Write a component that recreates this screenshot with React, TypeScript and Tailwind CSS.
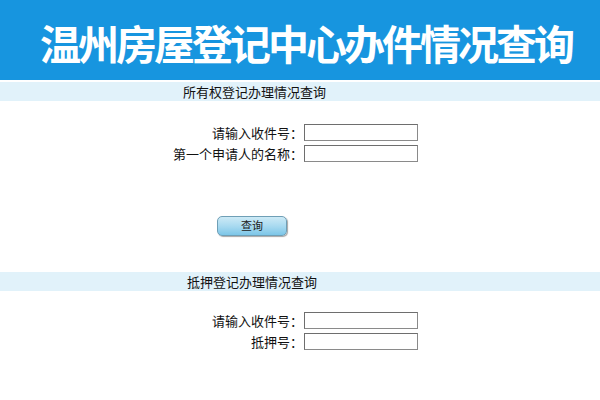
const cjk = "font-['Noto_Sans_CJK_SC','Noto_Sans',sans-serif]";

function Field({ label }: { label: string }) {
  return (
    <div className="flex items-center h-[17px]">
      <label className="w-[303px] text-right text-[13px] leading-none text-[#111]">{label}</label>
      <input
        type="text"
        className="block ml-[1px] w-[114px] h-[17px] border border-[#8a8a8a] border-t-[#6e6e6e] border-l-[#6e6e6e] bg-white outline-none"
      />
    </div>
  );
}

function Band({ title, indent }: { title: string; indent: string }) {
  return (
    <div className={`h-[19px] bg-[#e1f2fa] flex items-center text-[13px] leading-none text-[#111] ${indent}`}>
      {title}
    </div>
  );
}

export default function App() {
  return (
    <div className={`w-[600px] h-[400px] bg-white overflow-hidden ${cjk}`}>
      {/* Header */}
      <div className="h-[80px] bg-[#1795df] flex items-center pl-[40px] pt-[4px]">
        <h1 className="text-white text-[41px] font-bold leading-none whitespace-nowrap tracking-[-3px]">
          温州房屋登记中心办件情况查询
        </h1>
      </div>
      <div className="h-[2px]" />

      {/* Ownership query */}
      <Band title="所有权登记办理情况查询" indent="pl-[183px]" />
      <div className="pt-[23px] flex flex-col gap-[4px]">
        <Field label="请输入收件号：" />
        <Field label="第一个申请人的名称：" />
      </div>
      <div className="pt-[54px] pl-[217px]">
        <button className="block w-[70px] h-[20px] rounded-[5px] border border-[#6f9fb6] bg-gradient-to-b from-[#cdeaf6] via-[#a9daf0] to-[#7cc6e8] shadow-[1px_1px_1px_rgba(0,0,0,0.35)] text-[11px] leading-none text-[#1a1a1a] font-['Liberation_Serif','Noto_Sans_CJK_SC',serif]">
          查询
        </button>
      </div>

      {/* Mortgage query */}
      <div className="pt-[36px]">
        <Band title="抵押登记办理情况查询" indent="pl-[187px]" />
      </div>
      <div className="pt-[21px] flex flex-col gap-[4px]">
        <Field label="请输入收件号：" />
        <Field label="抵押号：" />
      </div>
    </div>
  );
}
